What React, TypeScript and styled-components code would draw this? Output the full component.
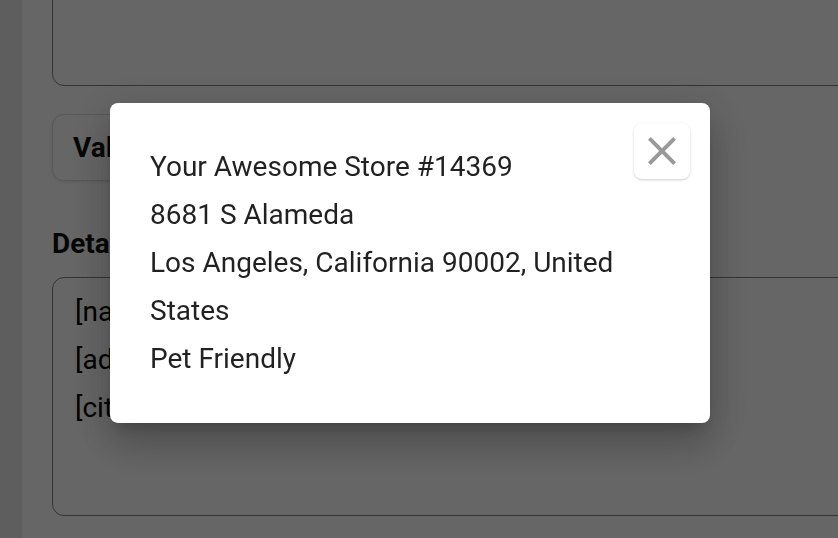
import React from "react";
import styled, { createGlobalStyle } from "styled-components";

const Global = createGlobalStyle`
  html, body { margin: 0; padding: 0; width: 100%; height: 100%; overflow: hidden; background: #ffffff; }
  body { font-family: Roboto, "Noto Sans", sans-serif; }
`;

const Page = styled.div`
  display: flex;
  width: 838px;
  height: 538px;
  overflow: hidden;
  background: #ffffff;
`;

const Sidebar = styled.aside`
  flex: 0 0 22px;
  background: #ebebeb;
`;

const Main = styled.main`
  flex: 1 1 auto;
  min-width: 0;
  padding: 0 0 0 30px;
  overflow: hidden;
`;

const Form = styled.div`
  width: 1000px;
  display: flex;
  flex-direction: column;
  margin-top: -60px;
`;

const Area = styled.div<{ $h: number }>`
  box-sizing: border-box;
  height: ${(p) => p.$h}px;
  border: 1px solid #858585;
  border-radius: 12px;
  padding: 10px 22px;
  font-size: 28px;
  line-height: 48px;
  color: #000;
  white-space: pre;
`;

const ValButton = styled.button`
  align-self: flex-start;
  margin-top: 28px;
  height: 67px;
  width: 200px;
  box-sizing: border-box;
  border: 1px solid #dcdcdc;
  border-radius: 12px;
  background: #ffffff;
  box-shadow: 0 1px 3px rgba(0, 0, 0, 0.12);
  font-family: Roboto, sans-serif;
  font-weight: 700;
  font-size: 28px;
  color: #111;
  text-align: left;
  padding: 0 20px;
`;

const Label = styled.div`
  margin-top: 48px;
  margin-bottom: 18px;
  font-size: 28px;
  font-weight: 700;
  color: #111;
  line-height: 30px;
`;

const Overlay = styled.div`
  position: fixed;
  inset: 0;
  background: rgba(0, 0, 0, 0.6);
`;

const Modal = styled.div`
  position: fixed;
  left: 110px;
  top: 103px;
  width: 600px;
  box-sizing: border-box;
  padding: 40px;
  background: #ffffff;
  border-radius: 8px;
  box-shadow: 0 11px 15px -7px rgba(0, 0, 0, 0.2), 0 24px 38px 3px rgba(0, 0, 0, 0.14),
    0 9px 46px 8px rgba(0, 0, 0, 0.12);
`;

const Line = styled.div`
  font-size: 28px;
  line-height: 48px;
  color: rgba(0, 0, 0, 0.87);
`;

const CloseButton = styled.button`
  position: absolute;
  top: 20px;
  right: 20px;
  width: 56px;
  height: 56px;
  border: none;
  border-radius: 8px;
  background: #ffffff;
  box-shadow: 0 1px 3px rgba(0, 0, 0, 0.12), 0 1px 2px rgba(0, 0, 0, 0.08);
  display: flex;
  align-items: center;
  justify-content: center;
  padding: 0;
  cursor: pointer;
`;

const CloseIcon = () => (
  <svg width="48" height="48" viewBox="0 0 24 24" fill="#999999">
    <path d="M19 6.41 17.59 5 12 10.59 6.41 5 5 6.41 10.59 12 5 17.59 6.41 19 12 13.41 17.59 19 19 17.59 13.41 12z" />
  </svg>
);

export default function App() {
  return (
    <>
      <Global />
      <Page>
        <Sidebar />
        <Main>
          <Form>
            <Area $h={146} />
            <ValButton>Validate</ValButton>
            <Label>Details</Label>
            <Area $h={239}>{"[name]\n[address]\n[city], [state] [zip], [country]"}</Area>
          </Form>
        </Main>
      </Page>
      <Overlay />
      <Modal>
        <CloseButton aria-label="close">
          <CloseIcon />
        </CloseButton>
        <Line>Your Awesome Store #14369</Line>
        <Line>8681 S Alameda</Line>
        <Line>Los Angeles, California 90002, United States</Line>
        <Line>Pet Friendly</Line>
      </Modal>
    </>
  );
}
